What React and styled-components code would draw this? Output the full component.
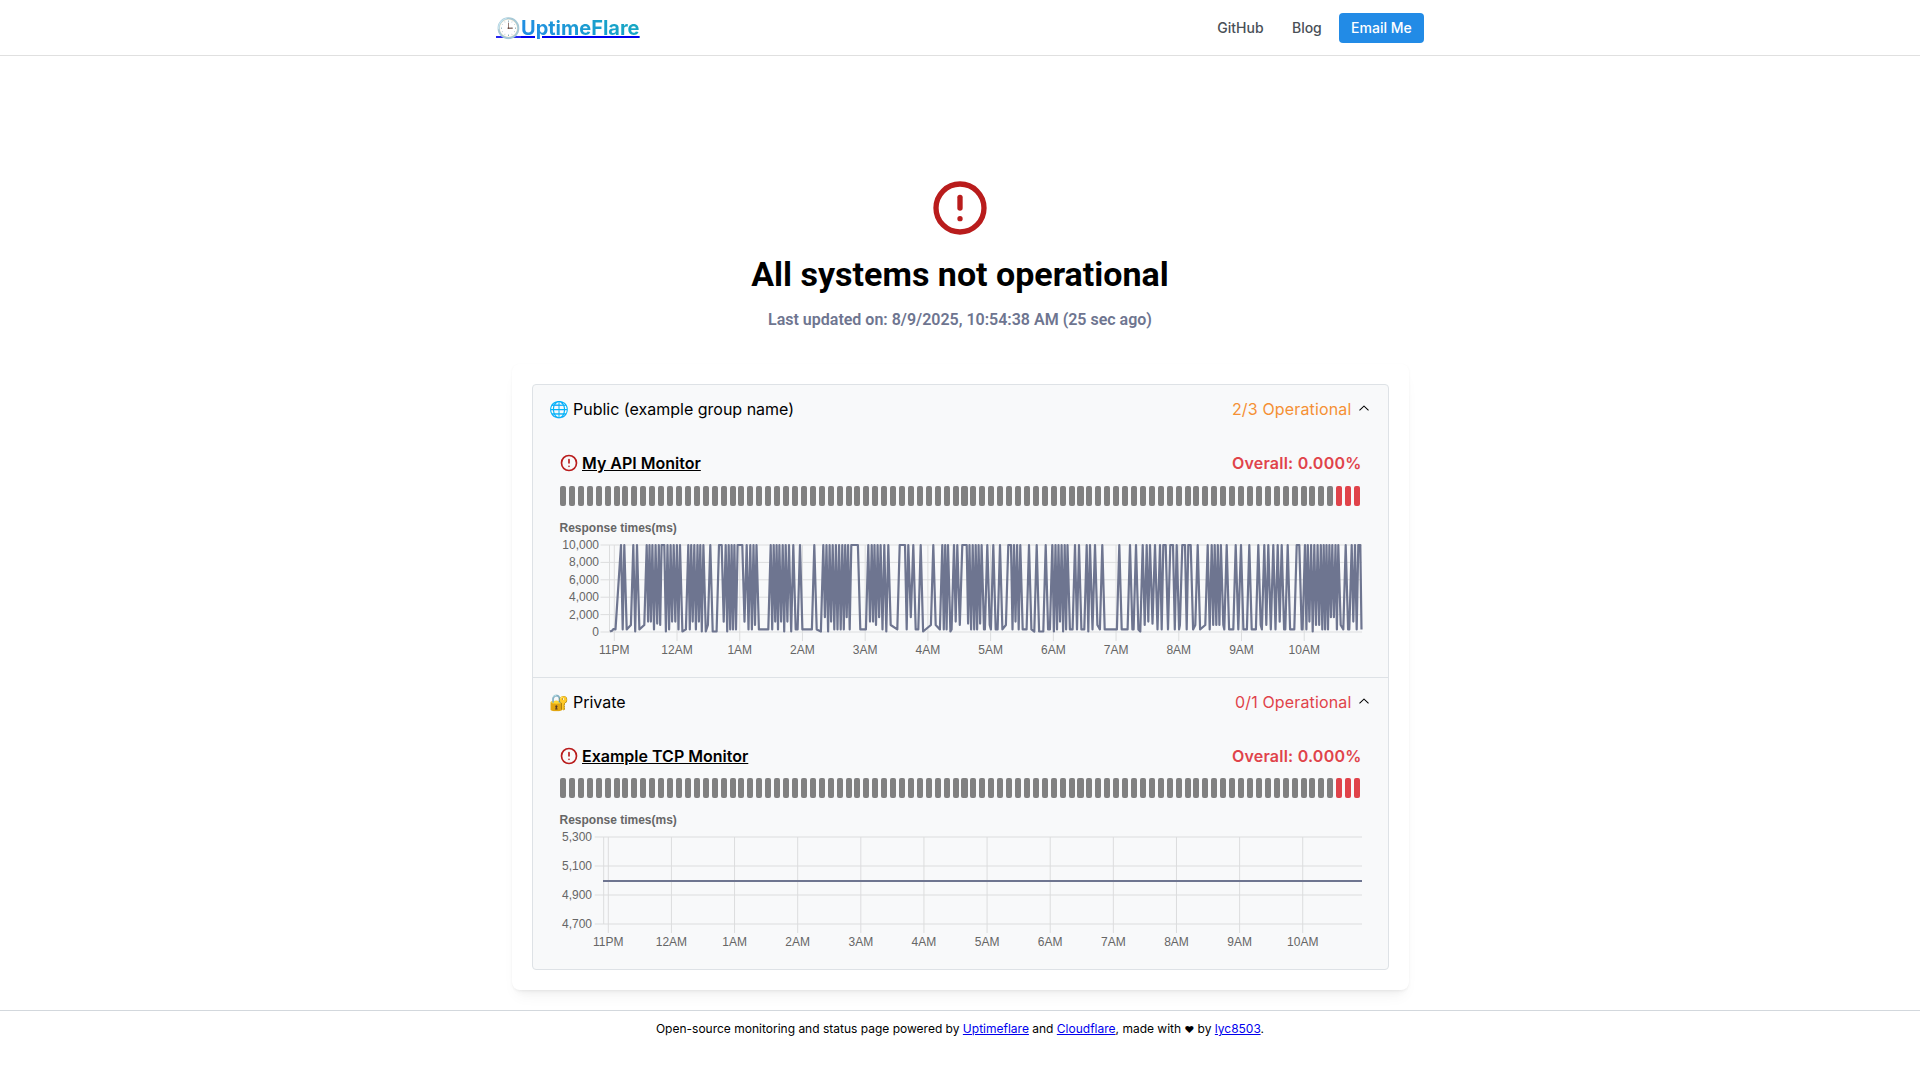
import React from 'react';
import styled, { createGlobalStyle } from 'styled-components';
import { TbAlertCircle } from 'react-icons/tb';

const Global = createGlobalStyle`
  html, body { margin: 0; padding: 0; background: #fff; }
  body { font-family: Inter, "Noto Sans", sans-serif; color: #000; }
  * { box-sizing: border-box; }
`;

const Page = styled.div`
  display: flex;
  flex-direction: column;
  min-height: 1080px;
`;
const Header = styled.header`
  height: 56px;
  border-bottom: 1px solid #e0e0e0;
  flex: none;
`;
const HeaderInner = styled.div`
  width: 960px;
  height: 55px;
  margin: 0 auto;
  padding: 0 16px;
  display: flex;
  align-items: center;
  justify-content: space-between;
`;
const Logo = styled.a`
  color: #0000ee;
  text-decoration: underline;
  font-size: 20px;
  font-weight: 700;
  line-height: 28px;
`;
const LogoEmoji = styled.span`
  opacity: 0.85;
`;
const LogoText = styled.span`
  background: linear-gradient(45deg, #228be6, #15aabf);
  -webkit-background-clip: text;
  background-clip: text;
  color: transparent;
`;
const Nav = styled.nav`
  display: flex;
  align-items: center;
`;
const NavLink = styled.a`
  font-family: Inter, sans-serif;
  font-size: 14px;
  font-weight: 500;
  line-height: 30px;
  color: #495057;
  padding: 0 14.2px;
  text-decoration: none;
`;
const NavButton = styled.a`
  font-family: Inter, sans-serif;
  font-size: 14px;
  font-weight: 500;
  line-height: 30px;
  height: 30px;
  margin-left: 2.8px;
  padding: 0 12.3px;
  color: #fff;
  background: #228be6;
  border-radius: 4px;
  text-decoration: none;
`;
const Hero = styled.section`
  display: flex;
  flex-direction: column;
  align-items: center;
  padding-top: 120px;
`;
const HeroIcon = styled(TbAlertCircle)`
  width: 64px;
  height: 64px;
  color: #b91c1c;
  display: block;
`;
const Title = styled.h1`
  margin: 12px 0 0;
  font-family: Roboto, sans-serif;
  font-size: 34px;
  font-weight: 700;
  line-height: 44px;
  color: #000;
`;
const Subtitle = styled.p`
  margin: 12px 0 0;
  font-family: Roboto, sans-serif;
  font-size: 16px;
  font-weight: 600;
  line-height: 24px;
  color: #6e7590;
`;
const Card = styled.section`
  width: 897px;
  margin: 32px auto 0;
  padding: 20px;
  background: #fff;
  border-radius: 8px;
  box-shadow: 0 1px 3px rgba(0,0,0,.05), 0 10px 15px -5px rgba(0,0,0,.05), 0 7px 7px -5px rgba(0,0,0,.04);
`;
const Accordion = styled.div`
  background: #f8f9fa;
  border: 1px solid #dee2e6;
  border-radius: 4px;
`;
const Group = styled.div`
  & + & { border-top: 1px solid #dee2e6; }
`;
const Control = styled.div`
  height: 48px;
  padding: 0 16px;
  display: flex;
  align-items: center;
  justify-content: space-between;
  font-size: 16px;
  line-height: 24px;
`;
const GroupStatus = styled.div`
  display: flex;
  align-items: center;
  gap: 4px;
  color: ${p => p.$color};
  letter-spacing: 0.15px;
`;
const Chevron = styled.svg`
  width: 16px;
  height: 16px;
  transform: rotate(180deg);
  color: #000;
`;
const Panel = styled.div`
  padding: 17px 26px 0 27.5px;
`;
const MonitorHead = styled.div`
  display: flex;
  align-items: center;
  justify-content: space-between;
  width: 800px;
  height: 25px;
  font-size: 16px;
  font-weight: 600;
`;
const MonitorName = styled.div`
  display: flex;
  align-items: center;
  gap: 3px;
  margin-left: -1px;
`;
const MonitorIcon = styled(TbAlertCircle)`
  width: 20px;
  height: 20px;
  color: #b91c1c;
  flex: none;
`;
const MonitorLink = styled.a`
  color: #000;
  text-decoration: underline;
`;
const Overall = styled.span`
  color: #e0434a;
  letter-spacing: 0.22px;
  margin-right: -1.5px;
`;
const Bars = styled.div`
  display: flex;
  gap: 2.9px;
  height: 20px;
  margin-top: ${p => p.$gap}px;
  width: 800px;
`;
const Bar = styled.div`
  flex: 1;
  border-radius: 2px;
  background: ${p => (p.$down ? '#e0434a' : '#808080')};
`;
const ChartSvg = styled.svg`
  display: block;
  width: 800px;
  height: 161px;
  margin-top: 10px;
  overflow: visible;
`;
const ChartTitle = styled.text`
  font: bold 12px "Liberation Sans", Arial, sans-serif;
  fill: #666;
`;
const ChartLabel = styled.text`
  font: 12px "Liberation Sans", Arial, sans-serif;
  fill: #666;
`;
const Footer = styled.footer`
  margin-top: 20px;
  border-top: 1px solid #d3d8dd;
  padding-top: 8px;
  text-align: center;
  font-size: 12px;
  line-height: 19px;
  color: #000;
`;
const FooterLink = styled.a`
  color: #0000ee;
  text-decoration: underline;
`;
const Heart = styled.span`
  font-size: 9.5px;
`;

const GRID = '#dcddde';
const TOP = 29;
const BOTTOM = 116;

function spikeData() {
  let seed = 17;
  const rnd = () => { seed = (seed * 16807) % 2147483647; return seed / 2147483647; };
  const peaks = [];
  const seg = (base, singles, denses) => {
    singles.forEach(z => peaks.push(base + z / 3));
    denses.forEach(([a, b]) => {
      let x = base + a / 3;
      const e = base + b / 3;
      while (x <= e) { peaks.push(x); x += 2.8 + rnd() * 0.5; }
    });
  };
  seg(605,
    [48, 58, 85, 96, 316, 342, 350, 404, 412, 425, 565, 585, 628],
    [[125, 170], [178, 232], [250, 298], [362, 398], [436, 460], [497, 555], [655, 740], [747, 765]]);
  seg(855,
    [40, 88, 100, 134, 142, 150, 160, 175, 197, 235, 297, 307, 322, 330, 397, 415, 435, 460, 522, 545, 572, 660, 672, 695, 705, 720, 742],
    [[0, 12], [50, 80], [262, 283], [335, 380], [468, 498], [592, 640]]);
  seg(1105,
    [43, 75, 93, 113, 125, 135, 150, 165, 175, 182, 196, 204, 215, 232, 240, 250, 257, 278, 308, 365, 392, 408, 433, 460, 478, 490, 505, 518, 530, 548, 575, 583, 700, 722, 740, 750, 760, 766],
    [[320, 352], [600, 695]]);
  peaks.sort((a, b) => a - b);
  const yOf = v => BOTTOM - (v / 10000) * (BOTTOM - TOP);
  const lowVal = () => { const r = rnd(); return r < 0.15 ? 60 : r < 0.8 ? 300 : 800; };
  const pts = [[610, yOf(60)], [612, yOf(150)], [613.5, yOf(350)], [615.5, yOf(300)]];
  const hw = 2.4;
  peaks.forEach((x, i) => {
    const prev = i ? peaks[i - 1] : null;
    if (prev !== null) {
      const d = x - prev;
      if (d >= 5.4) {
        pts.push([prev + hw, yOf(lowVal())]);
        pts.push([x - hw, yOf(lowVal())]);
      } else if (d >= 2.75) {
        pts.push([(prev + x) / 2, yOf(lowVal() + (rnd() < 0.3 ? 900 : 0))]);
      }
    }
    pts.push([x, yOf(10000)]);
  });
  pts.push([1361.5, yOf(300)]);
  return pts.map(p => `${(p[0] - 560).toFixed(1)},${p[1].toFixed(1)}`).join(' ');
}

const HOURS = ['11PM', '12AM', '1AM', '2AM', '3AM', '4AM', '5AM', '6AM', '7AM', '8AM', '9AM', '10AM'];

function Chart({ yLabels, axisX, labelRight, firstTick, pitch, line, lineWidth }) {
  const right = 802;
  const ax = axisX - 560;
  const rowH = (BOTTOM - TOP) / (yLabels.length - 1);
  return (
    <ChartSvg viewBox="0 0 800 161">
      <ChartTitle x="-0.5" y="16">Response times(ms)</ChartTitle>
      {yLabels.map((l, i) => {
        const y = TOP + i * rowH;
        return (
          <g key={l}>
            <line x1={ax - 9} x2={right} y1={y} y2={y} stroke={GRID} />
            <ChartLabel x={labelRight - 560} y={y + 4} textAnchor="end">{l}</ChartLabel>
          </g>
        );
      })}
      <line x1={ax} x2={ax} y1={TOP} y2={BOTTOM} stroke={GRID} />
      {HOURS.map((h, i) => {
        const x = firstTick - 560 + i * pitch;
        return (
          <g key={h}>
            <line x1={x} x2={x} y1={TOP} y2={BOTTOM + 9} stroke={GRID} />
            <ChartLabel x={x} y={BOTTOM + 22} textAnchor="middle">{h}</ChartLabel>
          </g>
        );
      })}
      <polyline points={line} fill="none" stroke="#6e7590" strokeWidth={lineWidth} strokeLinejoin="round" />
    </ChartSvg>
  );
}

function Monitor({ name, barGap, ...chart }) {
  return (
    <div>
      <MonitorHead>
        <MonitorName>
          <MonitorIcon />
          <MonitorLink href="#">{name}</MonitorLink>
        </MonitorName>
        <Overall>Overall: 0.000%</Overall>
      </MonitorHead>
      <Bars $gap={barGap}>
        {Array.from({ length: 90 }, (_, i) => <Bar key={i} $down={i >= 87} />)}
      </Bars>
      <Chart {...chart} />
    </div>
  );
}

function GroupHead({ label, status, color }) {
  return (
    <Control>
      <span>{label}</span>
      <GroupStatus $color={color}>
        {status}
        <Chevron viewBox="0 0 15 15" fill="none">
          <path fill="currentColor" fillRule="evenodd" clipRule="evenodd" d="M3.13523 6.15803C3.3241 5.95657 3.64052 5.94637 3.84197 6.13523L7.5 9.56464L11.158 6.13523C11.3595 5.94637 11.6759 5.95657 11.8648 6.15803C12.0536 6.35949 12.0434 6.67591 11.842 6.86477L7.84197 10.6148C7.64964 10.7951 7.35036 10.7951 7.15803 10.6148L3.15803 6.86477C2.95657 6.67591 2.94637 6.35949 3.13523 6.15803Z" />
        </Chevron>
      </GroupStatus>
    </Control>
  );
}

export default function App() {
  const spikes = spikeData();
  const flat = `${603 - 560},73 802,73`;
  return (
    <Page>
      <Global />
      <Header>
        <HeaderInner>
          <Logo href="#"><LogoEmoji>🕒</LogoEmoji><LogoText>UptimeFlare</LogoText></Logo>
          <Nav>
            <NavLink href="#">GitHub</NavLink>
            <NavLink href="#">Blog</NavLink>
            <NavButton href="#">Email Me</NavButton>
          </Nav>
        </HeaderInner>
      </Header>
      <Hero>
        <HeroIcon />
        <Title>All systems not operational</Title>
        <Subtitle>Last updated on: 8/9/2025, 10:54:38 AM (25 sec ago)</Subtitle>
      </Hero>
      <Card>
        <Accordion>
          <Group>
            <GroupHead label="🌐 Public (example group name)" status="2/3 Operational" color="#f59034" />
            <Panel>
              <Monitor
                name="My API Monitor"
                barGap={11}
                yLabels={['10,000', '8,000', '6,000', '4,000', '2,000', '0']}
                axisX={609.5}
                labelRight={599}
                firstTick={614.3}
                pitch={62.72}
                line={spikes}
                lineWidth={2.2}
              />
            </Panel>
          </Group>
          <Group>
            <GroupHead label="🔐 Private" status="0/1 Operational" color="#e0434a" />
            <Panel>
              <Monitor
                name="Example TCP Monitor"
                barGap={10}
                yLabels={['5,300', '5,100', '4,900', '4,700']}
                axisX={603.7}
                labelRight={592}
                firstTick={608.3}
                pitch={63.13}
                line={flat}
                lineWidth={2}
              />
            </Panel>
          </Group>
        </Accordion>
      </Card>
      <Footer>
        Open-source monitoring and status page powered by <FooterLink href="#">Uptimeflare</FooterLink> and <FooterLink href="#">Cloudflare</FooterLink>, made with <Heart>❤</Heart> by <FooterLink href="#">lyc8503</FooterLink>.
      </Footer>
    </Page>
  );
}
